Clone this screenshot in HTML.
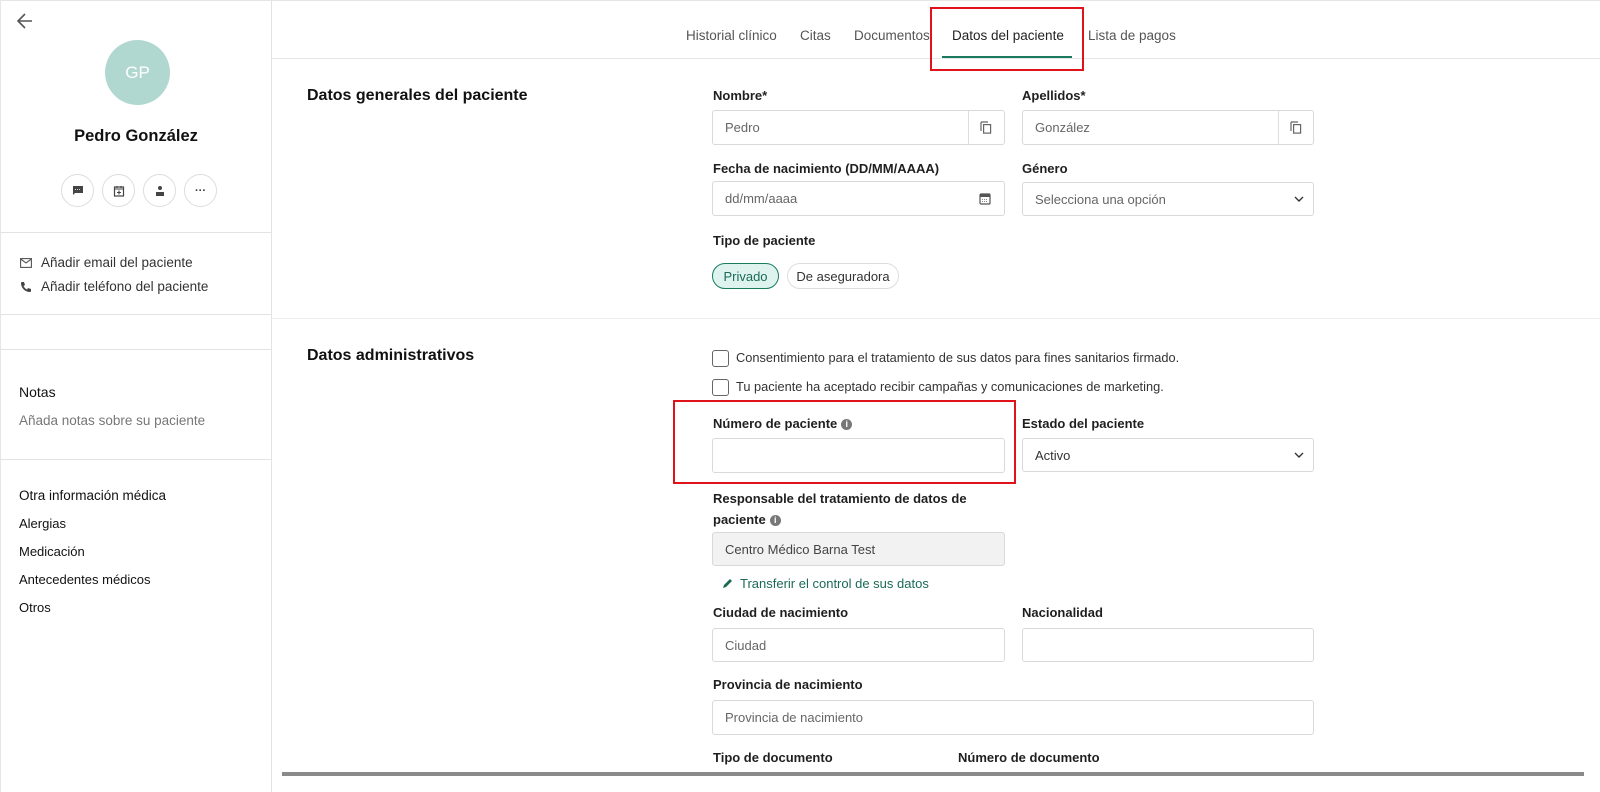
<!DOCTYPE html>
<html><head><meta charset="utf-8"><style>
*{box-sizing:border-box;margin:0;padding:0}
body{width:1600px;height:792px;overflow:hidden;background:#fff;font-family:"Liberation Sans",Arial,sans-serif;color:#222;position:relative}
.a{position:absolute}
.lbl{position:absolute;font-size:13px;font-weight:bold;color:#1f1f1f}
.inp{position:absolute;border:1px solid #d9d9d9;border-radius:3px;background:#fff;font-size:13px;color:#666;padding-left:12px;display:flex;align-items:center}
.side{font-size:13.5px;color:#333}
.tab{position:absolute;top:28px;font-size:13.5px;color:#555}
.circ{position:absolute;top:174px;width:33px;height:33px;border:1px solid #ddd;border-radius:50%;display:flex;align-items:center;justify-content:center}
.cb{position:absolute;left:712px;width:17px;height:17px;border:1.3px solid #666;border-radius:3px}
.cbt{position:absolute;left:736px;font-size:12.8px;color:#333}
.info{display:inline-block;width:11px;height:11px;border-radius:50%;background:#777;color:#fff;font-size:9px;text-align:center;line-height:11px;vertical-align:1px;margin-left:4px;font-weight:bold}
</style></head><body>
<div class="a" style="left:0;top:0;width:1600px;height:1px;background:#e6e6e6"></div>
<div class="a" style="left:271px;top:0;width:1px;height:792px;background:#e3e3e3"></div>
<div class="a" style="left:0;top:0;width:1px;height:792px;background:#e6e6e6"></div>
<svg class="a" style="left:16px;top:12px" width="18" height="18" viewBox="0 0 18 18"><path d="M16 9H2M9 2L2 9l7 7" stroke="#555" stroke-width="1.6" fill="none"/></svg>
<div class="a" style="left:105px;top:40px;width:65px;height:65px;border-radius:50%;background:#b1d8d0;color:#fff;font-size:17px;display:flex;align-items:center;justify-content:center">GP</div>
<div class="a" style="left:0;width:272px;top:127px;text-align:center;font-size:16.5px;font-weight:bold;color:#111">Pedro González</div>
<div class="circ" style="left:61px"><svg width="12" height="12" viewBox="0 0 12 12"><path d="M1 1h10v7H3l-2 2z" fill="#444"/><path d="M3 4.5h6" stroke="#fff" stroke-width=".8" stroke-dasharray="1 1"/></svg></div>
<div class="circ" style="left:102px"><svg width="12" height="12" viewBox="0 0 12 12"><rect x="1.5" y="2" width="9" height="9" fill="none" stroke="#444" stroke-width="1.2"/><path d="M1.5 4h9M4 1v2M8 1v2M6 5.5v4M4 7.5h4" stroke="#444" stroke-width="1.1"/></svg></div>
<div class="circ" style="left:143px"><svg width="12" height="12" viewBox="0 0 12 12"><circle cx="6" cy="3" r="2" fill="#444"/><rect x="2" y="7" width="8" height="4" fill="#444"/></svg></div>
<div class="circ" style="left:184px;font-size:11px;color:#333;font-weight:bold">···</div>
<div class="a" style="left:0;top:232px;width:271px;height:1px;background:#e3e3e3"></div>
<svg class="a" style="left:20px;top:258px" width="12" height="10" viewBox="0 0 12 10"><rect x=".6" y=".6" width="10.8" height="8.8" fill="none" stroke="#555" stroke-width="1.1"/><path d="M.6 1l5.4 4 5.4-4" stroke="#555" fill="none" stroke-width="1.1"/></svg>
<div class="a side" style="left:41px;top:255px">Añadir email del paciente</div>
<svg class="a" style="left:20px;top:281px" width="12" height="12" viewBox="0 0 12 12"><path d="M2 1l2 0 1 3-1.5 1c.8 1.6 2 2.8 3.5 3.5L8 7l3 1v2c0 1-1 1-1 1C5 11 1 7 1 2c0 0 0-1 1-1z" fill="#444"/></svg>
<div class="a side" style="left:41px;top:279px">Añadir teléfono del paciente</div>
<div class="a" style="left:0;top:314px;width:271px;height:1px;background:#e3e3e3"></div>
<div class="a" style="left:0;top:349px;width:271px;height:1px;background:#e3e3e3"></div>
<div class="a" style="left:19px;top:384px;font-size:14px;color:#111">Notas</div>
<div class="a" style="left:19px;top:413px;font-size:13.5px;color:#777">Añada notas sobre su paciente</div>
<div class="a" style="left:0;top:459px;width:271px;height:1px;background:#e3e3e3"></div>
<div class="a" style="left:19px;top:488px;font-size:13.5px;color:#111">Otra información médica</div>
<div class="a" style="left:19px;top:516px;font-size:13px;color:#111">Alergias</div>
<div class="a" style="left:19px;top:544px;font-size:13px;color:#111">Medicación</div>
<div class="a" style="left:19px;top:572px;font-size:13px;color:#111">Antecedentes médicos</div>
<div class="a" style="left:19px;top:600px;font-size:13px;color:#111">Otros</div>
<div class="tab" style="left:686px">Historial clínico</div>
<div class="tab" style="left:800px">Citas</div>
<div class="tab" style="left:854px">Documentos</div>
<div class="tab" style="left:952px;color:#222">Datos del paciente</div>
<div class="tab" style="left:1088px">Lista de pagos</div>
<div class="a" style="left:942px;top:56px;width:130px;height:2px;background:#1a7a5e"></div>
<div class="a" style="left:272px;top:58px;width:1328px;height:1px;background:#e6e6e6"></div>
<div class="a" style="left:930px;top:7px;width:154px;height:64px;border:2.5px solid #e0121a"></div>
<div class="a" style="left:307px;top:87px;font-size:16px;font-weight:bold;color:#111">Datos generales del paciente</div>
<div class="lbl" style="left:713px;top:88px">Nombre*</div>
<div class="lbl" style="left:1022px;top:88px">Apellidos*</div>
<div class="inp" style="left:712px;top:110px;width:293px;height:35px">Pedro</div>
<div class="a" style="left:968px;top:111px;width:1px;height:33px;background:#ddd"></div>
<svg class="a" style="left:980px;top:121px" width="12" height="13" viewBox="0 0 12 13"><path d="M1 1v9M1 1h7" stroke="#666" stroke-width="1.2" fill="none"/><rect x="3.6" y="3.6" width="7" height="8.5" fill="none" stroke="#666" stroke-width="1.2"/></svg>
<div class="inp" style="left:1022px;top:110px;width:292px;height:35px">González</div>
<div class="a" style="left:1278px;top:111px;width:1px;height:33px;background:#ddd"></div>
<svg class="a" style="left:1290px;top:121px" width="12" height="13" viewBox="0 0 12 13"><path d="M1 1v9M1 1h7" stroke="#666" stroke-width="1.2" fill="none"/><rect x="3.6" y="3.6" width="7" height="8.5" fill="none" stroke="#666" stroke-width="1.2"/></svg>
<div class="lbl" style="left:713px;top:161px">Fecha de nacimiento (DD/MM/AAAA)</div>
<div class="lbl" style="left:1022px;top:161px">Género</div>
<div class="inp" style="left:712px;top:181px;width:293px;height:35px">dd/mm/aaaa</div>
<svg class="a" style="left:979px;top:192px" width="12" height="13" viewBox="0 0 12 13"><rect x="1" y="2" width="10" height="10" rx="1" fill="none" stroke="#555" stroke-width="1.2"/><rect x="1" y="2" width="10" height="3" fill="#555"/><path d="M3 7.5h6M3 9.5h6" stroke="#888" stroke-dasharray="1 1"/></svg>
<div class="inp" style="left:1022px;top:182px;width:292px;height:34px">Selecciona una opción</div>
<svg class="a" style="left:1294px;top:196px" width="10" height="7" viewBox="0 0 10 7"><path d="M1 1l4 4 4-4" stroke="#333" stroke-width="1.4" fill="none"/></svg>
<div class="lbl" style="left:713px;top:233px">Tipo de paciente</div>
<div class="a" style="left:712px;top:263px;width:67px;height:26px;border:1px solid #1a7a5e;border-radius:13px;background:#dff3ee;color:#1a6a55;font-size:13px;display:flex;align-items:center;justify-content:center">Privado</div>
<div class="a" style="left:787px;top:263px;width:112px;height:26px;border:1px solid #ddd;border-radius:13px;color:#333;font-size:13px;display:flex;align-items:center;justify-content:center">De aseguradora</div>
<div class="a" style="left:272px;top:318px;width:1328px;height:1px;background:#eee"></div>
<div class="a" style="left:307px;top:347px;font-size:16px;font-weight:bold;color:#111">Datos administrativos</div>
<div class="cb" style="top:350px"></div>
<div class="cbt" style="top:350px">Consentimiento para el tratamiento de sus datos para fines sanitarios firmado.</div>
<div class="cb" style="top:379px"></div>
<div class="cbt" style="top:379px">Tu paciente ha aceptado recibir campañas y comunicaciones de marketing.</div>
<div class="lbl" style="left:713px;top:416px">Número de paciente<span class="info">i</span></div>
<div class="lbl" style="left:1022px;top:416px">Estado del paciente</div>
<div class="inp" style="left:712px;top:438px;width:293px;height:35px"></div>
<div class="a" style="left:673px;top:400px;width:343px;height:84px;border:2.5px solid #e0121a"></div>
<div class="inp" style="left:1022px;top:438px;width:292px;height:34px;color:#333">Activo</div>
<svg class="a" style="left:1294px;top:452px" width="10" height="7" viewBox="0 0 10 7"><path d="M1 1l4 4 4-4" stroke="#333" stroke-width="1.4" fill="none"/></svg>
<div class="lbl" style="left:713px;top:488px;line-height:21px">Responsable del tratamiento de datos de<br>paciente<span class="info">i</span></div>
<div class="inp" style="left:712px;top:532px;width:293px;height:34px;background:#f2f2f2;color:#444">Centro Médico Barna Test</div>
<svg class="a" style="left:722px;top:578px" width="11" height="11" viewBox="0 0 11 11"><path d="M1 10l1-3 6-6 2 2-6 6z" fill="#1a6a55"/></svg>
<div class="a" style="left:740px;top:576px;font-size:13px;color:#1a6a55">Transferir el control de sus datos</div>
<div class="lbl" style="left:713px;top:605px">Ciudad de nacimiento</div>
<div class="lbl" style="left:1022px;top:605px">Nacionalidad</div>
<div class="inp" style="left:712px;top:628px;width:293px;height:34px">Ciudad</div>
<div class="inp" style="left:1022px;top:628px;width:292px;height:34px"></div>
<div class="lbl" style="left:713px;top:677px">Provincia de nacimiento</div>
<div class="inp" style="left:712px;top:700px;width:602px;height:35px">Provincia de nacimiento</div>
<div class="lbl" style="left:713px;top:750px">Tipo de documento</div>
<div class="lbl" style="left:958px;top:750px">Número de documento</div>
<div class="a" style="left:272px;top:770px;width:1328px;height:22px;background:#fff"></div>
<div class="a" style="left:282px;top:772px;width:1302px;height:4px;background:#8a8a8a"></div>
</body></html>
